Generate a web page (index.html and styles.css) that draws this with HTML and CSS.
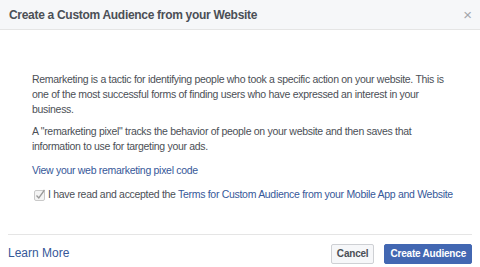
FILE: index.html
```html
<!DOCTYPE html>
<html lang="en">
<head>
    <meta charset="UTF-8">
    <title>Create a Custom Audience</title>
    <link rel="stylesheet" href="styles.css">
</head>
<body>
    <div class="dialog">
        <div class="dialog-header">
            <h2 class="dialog-title">Create a Custom Audience from your Website</h2>
            <span class="dialog-close">&times;</span>
        </div>
        <div class="dialog-body">
            <p>Remarketing is a tactic for identifying people who took a specific action on your website. This is one of the most successful forms of finding users who have expressed an interest in your business.</p>
            <p>A "remarketing pixel" tracks the behavior of people on your website and then saves that information to use for targeting your ads.</p>
            <p class="pixel-code"><a href="#" class="link">View your web remarketing pixel code</a></p>
            <label class="terms">
                <svg class="check" width="12" height="12" viewBox="0 0 12 12">
                    <rect x="0.5" y="1.5" width="10" height="10" rx="1.5" fill="#f4f4f4" stroke="#c9c9c9"/>
                    <path d="M2.5 6.5 L4.8 9 L10.5 1" fill="none" stroke="#9a9a9a" stroke-width="1.3"/>
                </svg>
                <span>I have read and accepted the <a href="#" class="link">Terms for Custom Audience from your Mobile App and Website</a></span>
            </label>
        </div>
        <div class="dialog-footer">
            <a href="#" class="learn-more">Learn More</a>
            <div class="buttons">
                <button type="button" class="btn">Cancel</button>
                <button type="button" class="btn btn-primary">Create Audience</button>
            </div>
        </div>
    </div>
</body>
</html>
```

FILE: styles.css
```css
body {
    margin: 0;
    background: #fff;
    font-family: "Liberation Sans", Arial, sans-serif;
    color: #4b4f56;
}

.dialog {
    width: 480px;
    height: 267px;
    display: flex;
    flex-direction: column;
}

.dialog-header {
    height: 29px;
    background: #f6f7f9;
    border-bottom: 1px solid #e5e5e5;
    display: flex;
    align-items: center;
    justify-content: space-between;
    padding: 0 8px 0 9px;
}

.dialog-title {
    margin: 0;
    font-size: 12px;
    letter-spacing: -0.3px;
    font-weight: bold;
    color: #4b4f56;
}

.dialog-close {
    font-size: 15px;
    color: #a3a6ac;
}

.dialog-body {
    flex: 1;
    padding: 42px 32px 0;
    font-size: 10.5px;
    letter-spacing: -0.3px;
    line-height: 15px;
}

.dialog-body p {
    margin: 0 0 7px;
}

.dialog-body .pixel-code {
    margin-top: 9px;
}

.link {
    color: #365899;
    text-decoration: none;
}

.terms {
    display: flex;
    align-items: center;
    gap: 2px;
    padding-left: 2px;
    margin-top: 9px;
    white-space: nowrap;
}

.check {
    flex: none;
}

.dialog-footer {
    margin: 0 8px;
    border-top: 1px solid #e5e5e5;
    height: 32px;
    display: flex;
    align-items: center;
    justify-content: space-between;
}

.learn-more {
    color: #365899;
    text-decoration: none;
    font-size: 12px;
    padding-top: 3px;
}

.buttons {
    display: flex;
    gap: 10px;
    padding-top: 5px;
}

.btn {
    font-family: "Liberation Sans", Arial, sans-serif;
    font-size: 10px;
    letter-spacing: -0.2px;
    font-weight: bold;
    height: 20px;
    padding: 0 5px;
    border: 1px solid #ced0d4;
    border-radius: 2px;
    background: #f6f7f9;
    color: #4b4f56;
}

.btn-primary {
    background: #4267b2;
    border-color: #4267b2;
    color: #fff;
}
```
